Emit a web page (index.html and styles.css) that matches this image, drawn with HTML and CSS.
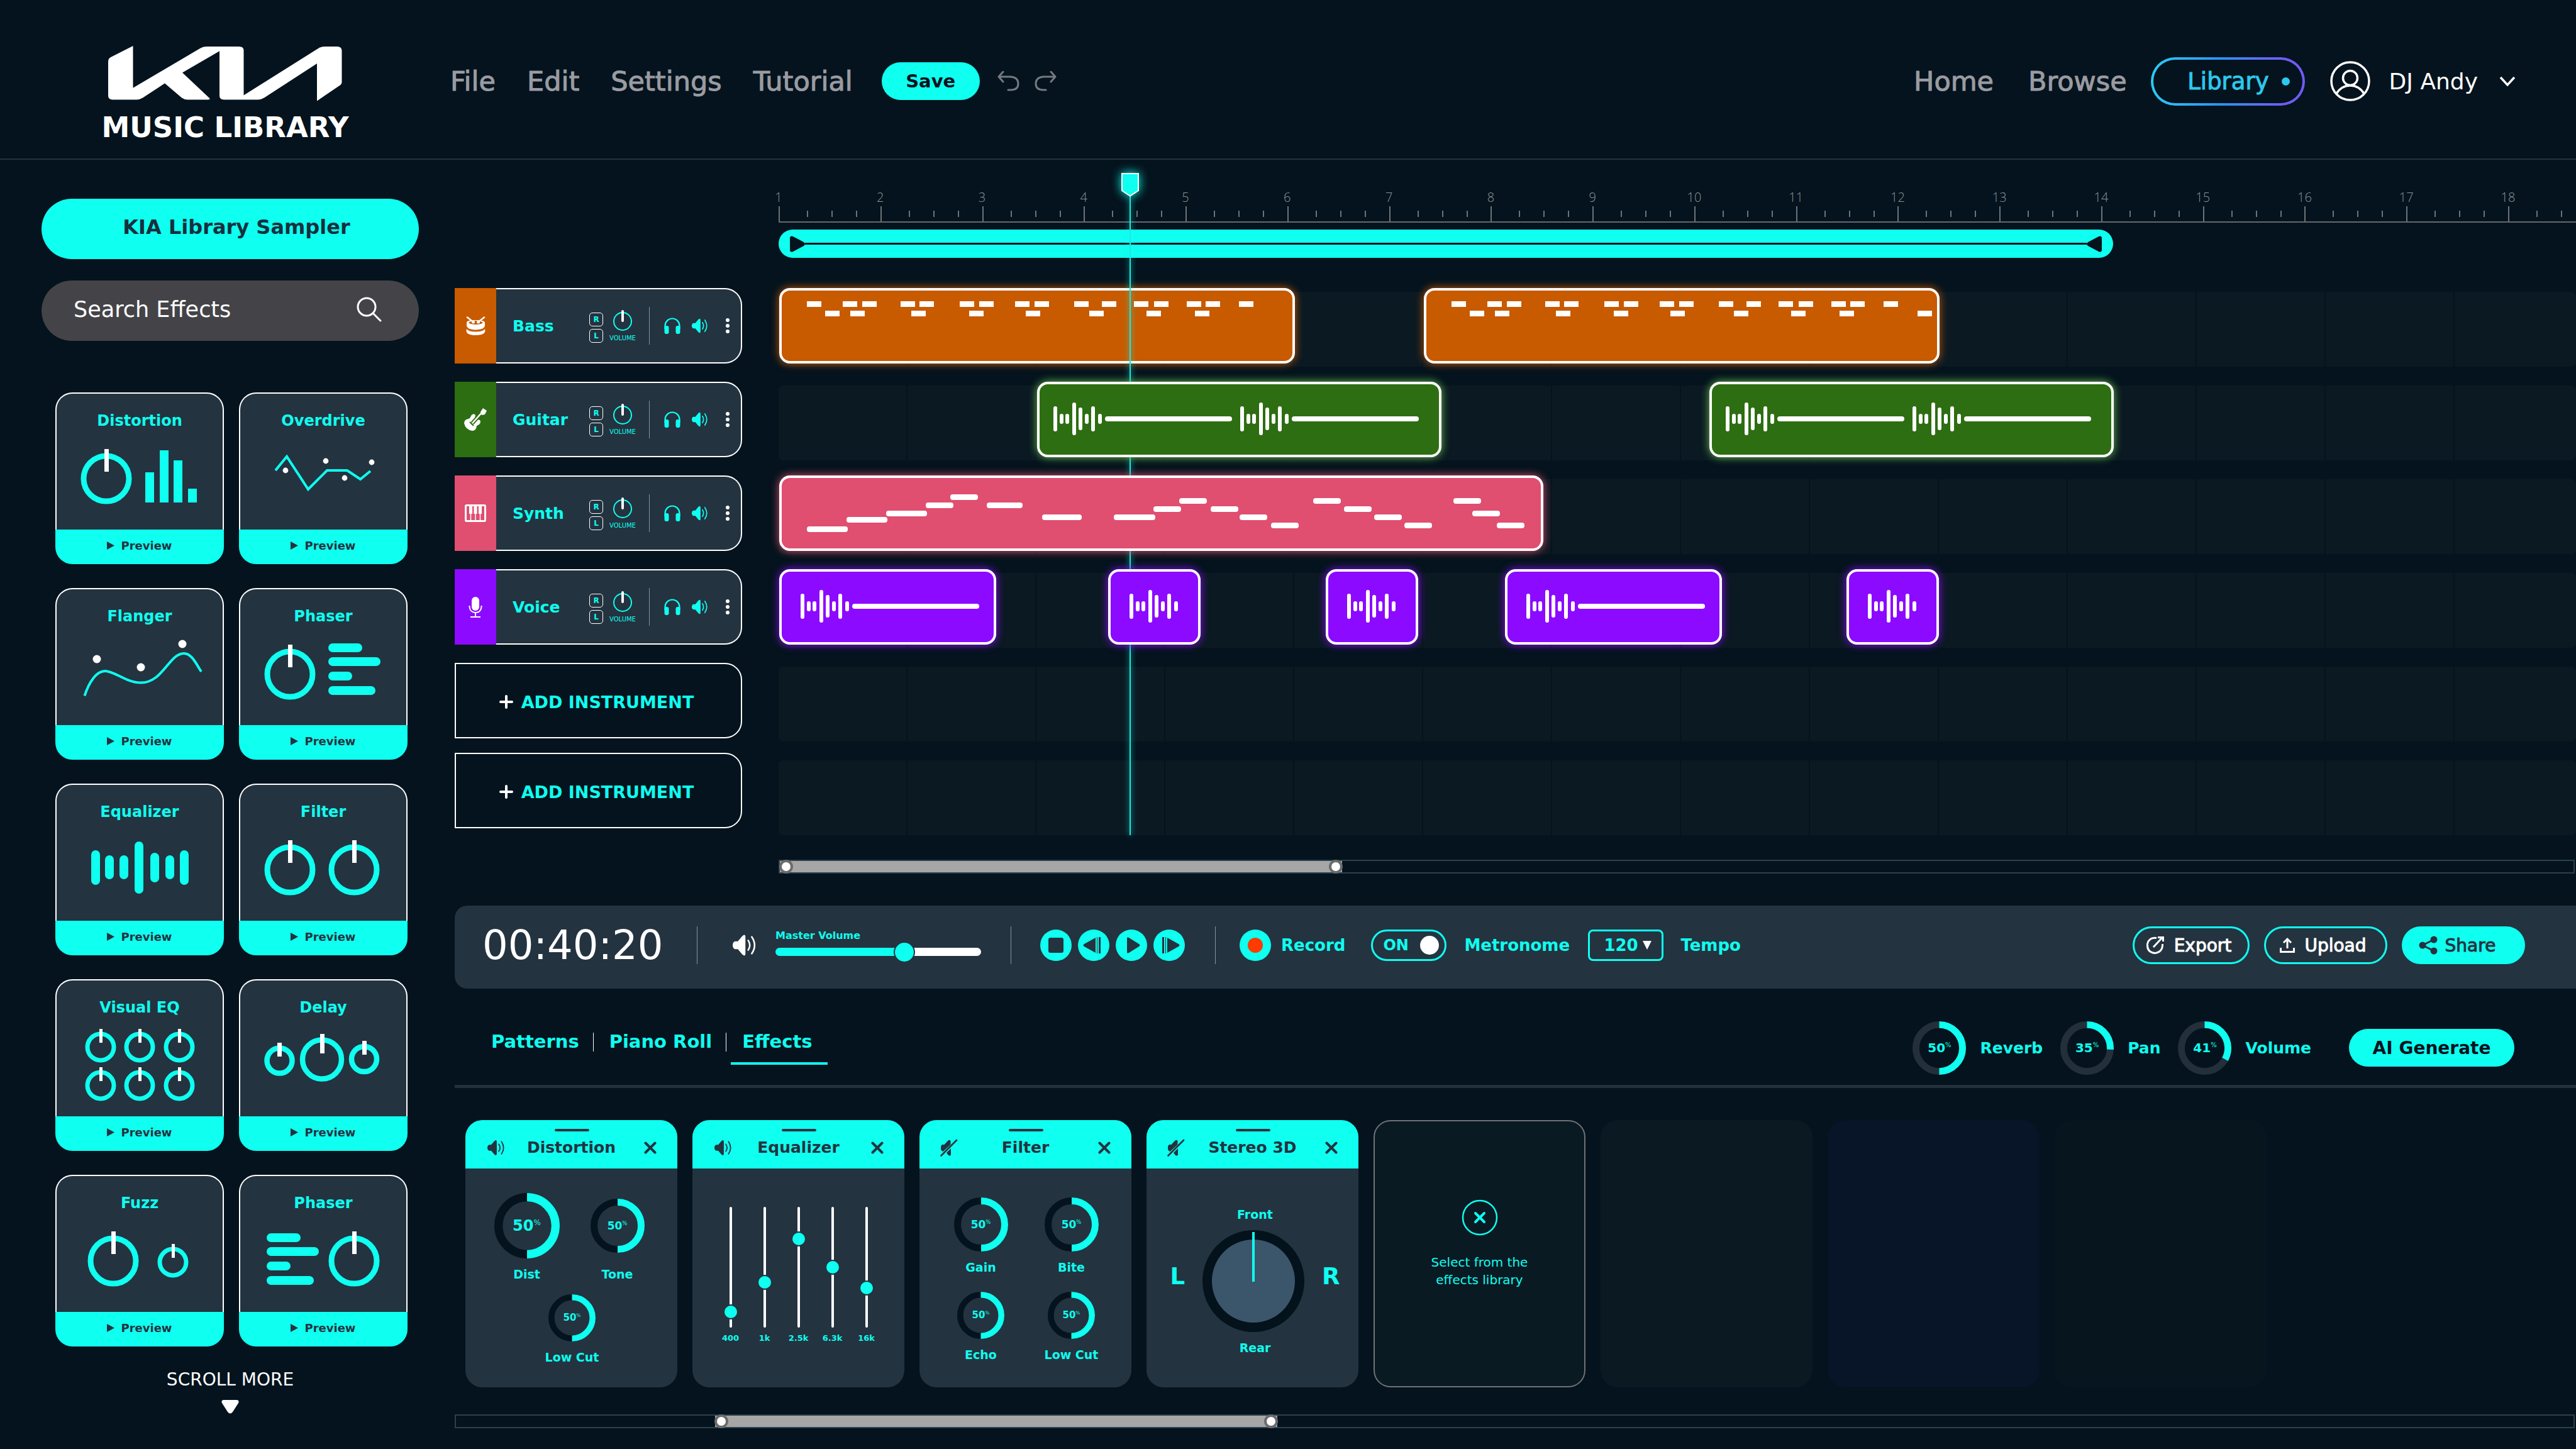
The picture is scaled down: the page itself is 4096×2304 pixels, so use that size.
FILE: index.html
```html
<!DOCTYPE html>
<html lang="en">
<head>
<meta charset="utf-8">
<title>KIA Music Library</title>
<link rel="stylesheet" href="styles.css">
</head>
<body>
<svg class="sprite" aria-hidden="true">
  <symbol id="speaker" viewBox="0 0 30 30"><path fill="currentColor" d="M3 10h3.500L12 3.500Q16 0 16 5v20q0 5-4 1.500L6.500 20H3q-3-1-3-5t3-5z"/><path d="M19.500 9q4 6 0 12M24 4.500q7 10.500 0 21" fill="none" stroke="currentColor" stroke-width="2" stroke-linecap="round"/></symbol>
  <symbol id="muted" viewBox="0 0 28 28"><path fill="currentColor" d="M3 9h3.500L12 3q3-2.500 4.500 0v6L4.500 20Q1 19 1 14.500T3 9zM17 15v10q-1 3-4 1l-3-4z"/><path d="M1.500 26.500L26 2" stroke="currentColor" stroke-width="2.600" stroke-linecap="round"/></symbol>
  <symbol id="phones" viewBox="0 0 26 26"><path d="M1.500 18v-5a11.500 11.500 0 0 1 23 0v5" fill="none" stroke="currentColor" stroke-width="2.200"/><rect x="0.500" y="13" width="7" height="13" rx="3" fill="currentColor"/><rect x="18.500" y="13" width="7" height="13" rx="3" fill="currentColor"/></symbol>
  <symbol id="more" viewBox="0 0 6 26"><g fill="#fff"><circle cx="3" cy="4" r="3"/><circle cx="3" cy="13" r="3"/><circle cx="3" cy="22" r="3"/></g></symbol>
  <symbol id="gain" viewBox="0 0 32 36"><circle cx="16" cy="19" r="14" fill="none" stroke="#0ffff0" stroke-width="2"/><path d="M16 3v15" stroke="#fff" stroke-width="4" stroke-linecap="round"/></symbol>
  <symbol id="close" viewBox="0 0 20 20"><path d="M2.500 2.500l15 15M17.500 2.500l-15 15" stroke="currentColor" stroke-width="4" stroke-linecap="round"/></symbol>
  <symbol id="play" viewBox="0 0 12 13"><path fill="currentColor" d="M0 0l12 6.500L0 13z"/></symbol>
  <symbol id="ticks" viewBox="0 0 162 26"><path fill="#6d7378" d="M0 2h2v24H0zM45 9h2v10h-2zM84 9h2v10h-2zM123 9h2v10h-2z"/></symbol>
  <symbol id="knob-l" viewBox="0 0 84 84" overflow="visible"><circle cx="42" cy="47" r="36" fill="none" stroke="#0ffff0" stroke-width="9"/><path d="M42.500 0v36" stroke="#fff" stroke-width="7"/></symbol>
  <symbol id="knob-s" viewBox="0 0 50 56" overflow="visible"><circle cx="25" cy="29" r="21" fill="none" stroke="#0ffff0" stroke-width="7"/><path d="M25.500 0v22" stroke="#fff" stroke-width="5"/></symbol>
  <symbol id="bars" viewBox="0 0 84 88"><g fill="#0ffff0"><rect width="54" height="14" rx="7"/><rect y="22" width="83" height="14" rx="7"/><rect y="45" width="38" height="14" rx="7"/><rect y="68" width="75" height="14" rx="7"/></g></symbol>
  <symbol id="dial50" viewBox="0 0 86 86"><circle class="dial-track" cx="43" cy="43" r="37.500"/><circle class="dial-value" cx="43" cy="43" r="37.500" pathLength="100" stroke-dasharray="50 100"/></symbol>
  <symbol id="wave" viewBox="0 0 90 60" overflow="visible"><g fill="#fff"><rect x="0" y="10" width="6" height="40" rx="3"/><rect x="10" y="22" width="6" height="16" rx="3"/><rect x="19" y="22" width="6" height="16" rx="3"/><rect x="30" y="4" width="6" height="52" rx="3"/><rect x="40" y="12" width="6" height="36" rx="3"/><rect x="50" y="22" width="6" height="16" rx="3"/><rect x="60" y="10" width="6" height="40" rx="3"/><rect x="71" y="22" width="6" height="16" rx="3"/></g></symbol>
  <symbol id="hold" viewBox="0 0 202 8"><rect width="202" height="8" rx="4" fill="#fff"/></symbol>
  <symbol id="beats" viewBox="0 0 812 112"><path fill="#fff" d="M40 17h23v9h-23zM97 17h23v9h-23zM128 17h23v9h-23zM189 17h23v9h-23zM219 17h23v9h-23zM283 17h23v9h-23zM314 17h23v9h-23zM371 17h23v9h-23zM402 17h23v9h-23zM465 17h23v9h-23zM509 17h23v9h-23zM560 17h23v9h-23zM592 17h23v9h-23zM644 17h23v9h-23zM674 17h23v9h-23zM727 17h23v9h-23zM69 32h23v9h-23zM109 32h23v9h-23zM206 32h23v9h-23zM298 32h23v9h-23zM388 32h23v9h-23zM489 32h23v9h-23zM580 32h23v9h-23zM657 32h23v9h-23z"/></symbol>
</svg>

<header class="top">
  <div class="brand">
    <svg class="brand-mark" viewBox="0 0 372 88" role="img" aria-label="KIA"><path fill="#fff" d="M39.500 0V66.700L146 4Q150.500 1 156 1H208Q215.500 1 215.500 7V78.600L334 4Q338.500 1 344 1H364Q371.500 1 371.500 8V57Q371.500 61 368 63L332 87.600V28L248 82.500Q243.500 85.400 238 85.400H184Q177 85.400 177 79V8.300L118 42.500L161 83Q163 85.400 159 85.400H126Q121 85.400 117 82.500L90 59.500L55 82.500Q50.500 85.400 45 85.400H7Q0 85.400 0 79V25Q0 20 4 18Z"/></svg>
    <span class="brand-name">MUSIC LIBRARY</span>
  </div>
  <nav class="menu" aria-label="Application">
    <a href="#">File</a><a href="#">Edit</a><a href="#">Settings</a><a href="#">Tutorial</a>
  </nav>
  <button class="save" type="button">Save</button>
  <button class="plain" type="button" aria-label="Undo"><svg width="36" height="32" viewBox="0 0 36 32"><path d="M9 1L2 9l7 8M2 9h19q12 1 12 11t-12 10h-4" class="arrow"/></svg></button>
  <button class="plain" type="button" aria-label="Redo"><svg width="36" height="32" viewBox="0 0 36 32"><path d="M27 1l7 8l-7 8M34 9H15Q3 10 3 20t12 10h4" class="arrow"/></svg></button>
  <nav class="sections" aria-label="Sections">
    <a href="#">Home</a><a href="#">Browse</a><a class="current" href="#">Library<i></i></a>
  </nav>
  <button class="account" type="button">
    <svg width="64" height="64" viewBox="0 0 64 64" fill="none" stroke="#fff" stroke-width="3.500"><circle cx="32" cy="32" r="30"/><circle cx="32" cy="27" r="11.500"/><path d="M10 52Q18 39 32 39T54 52"/></svg>
    <span>DJ Andy</span>
    <svg width="26" height="18" viewBox="0 0 26 18"><path d="M2 3l11 12L24 3" fill="none" stroke="#fff" stroke-width="3.500"/></svg>
  </button>
</header>

<div class="body">
<aside class="library">
  <button class="sampler" type="button">KIA Library Sampler</button>
  <form class="search" role="search">
    <input type="search" aria-label="Search Effects" placeholder="Search Effects">
    <svg width="40" height="40" viewBox="0 0 40 40" fill="none" stroke="#fff" stroke-width="3"><circle cx="16" cy="16" r="14"/><path d="M26 26l12 12" stroke-linecap="round"/></svg>
  </form>
  <div class="cards">
    <article class="card"><div class="card-top"><h3>Distortion</h3><svg viewBox="2 64 264 152"><use href="#knob-l" x="39" y="90" width="84" height="84"/><path fill="#0ffff0" d="M143 127h14v48h-14zM166 92h14v83h-14zM188 108h14v67h-14zM211 153h14v22h-14z"/></svg></div><button type="button"><svg><use href="#play"/></svg>Preview</button></article>
    <article class="card"><div class="card-top"><h3>Overdrive</h3><svg viewBox="2 64 264 152"><path d="M58 124L76 102L110 154L140 124H172L193 138L209 125" fill="none" stroke="#0ffff0" stroke-width="4"/><g fill="#fff"><circle cx="74" cy="124" r="4.400"/><circle cx="138" cy="109" r="4.400"/><circle cx="168" cy="136" r="4.400"/><circle cx="211" cy="111" r="4.400"/></g></svg></div><button type="button"><svg><use href="#play"/></svg>Preview</button></article>
    <article class="card"><div class="card-top"><h3>Flanger</h3><svg viewBox="2 64 264 152"><path d="M46.500 171.400C54 148 66 132 79 132C94 132 113 150.600 136 150.600C171 150.600 181 104 204.500 104C217 104 224 121 232 133" fill="none" stroke="#0ffff0" stroke-width="4"/><g fill="#fff"><circle cx="66" cy="113" r="6.500"/><circle cx="136" cy="126" r="6.500"/><circle cx="202" cy="89" r="6.500"/></g></svg></div><button type="button"><svg><use href="#play"/></svg>Preview</button></article>
    <article class="card"><div class="card-top"><h3>Phaser</h3><svg viewBox="2 64 264 152"><use href="#knob-l" x="39" y="90" width="84" height="84"/><use href="#bars" x="142" y="88" width="84" height="88"/></svg></div><button type="button"><svg><use href="#play"/></svg>Preview</button></article>
    <article class="card"><div class="card-top"><h3>Equalizer</h3><svg viewBox="2 64 264 152"><g fill="#0ffff0"><rect x="57" y="106" width="14" height="55" rx="7"/><rect x="79" y="114" width="14" height="38" rx="7"/><rect x="102" y="114" width="14" height="38" rx="7"/><rect x="126" y="92" width="14" height="83" rx="7"/><rect x="151" y="110" width="14" height="47" rx="7"/><rect x="175" y="114" width="14" height="38" rx="7"/><rect x="198" y="106" width="14" height="55" rx="7"/></g></svg></div><button type="button"><svg><use href="#play"/></svg>Preview</button></article>
    <article class="card"><div class="card-top"><h3>Filter</h3><svg viewBox="2 64 264 152"><use href="#knob-l" x="39" y="90" width="84" height="84"/><use href="#knob-l" x="141" y="90" width="84" height="84"/></svg></div><button type="button"><svg><use href="#play"/></svg>Preview</button></article>
    <article class="card"><div class="card-top"><h3>Visual EQ</h3><svg viewBox="2 64 264 152"><use href="#knob-s" x="47" y="79" width="50" height="56"/><use href="#knob-s" x="109" y="79" width="50" height="56"/><use href="#knob-s" x="172" y="79" width="50" height="56"/><use href="#knob-s" x="47" y="140" width="50" height="56"/><use href="#knob-s" x="109" y="140" width="50" height="56"/><use href="#knob-s" x="172" y="140" width="50" height="56"/></svg></div><button type="button"><svg><use href="#play"/></svg>Preview</button></article>
    <article class="card"><div class="card-top"><h3>Delay</h3><svg viewBox="2 64 264 152"><g fill="none" stroke="#0ffff0" stroke-width="8.500"><circle cx="64.500" cy="129.500" r="20"/><circle cx="132" cy="127.500" r="31"/><circle cx="199" cy="127" r="20"/></g><path fill="#fff" d="M61 101h7v22h-7zM129 87h7v31h-7zM196 98h7v22h-7z"/></svg></div><button type="button"><svg><use href="#play"/></svg>Preview</button></article>
    <article class="card"><div class="card-top"><h3>Fuzz</h3><svg viewBox="2 64 264 152"><use href="#knob-l" x="50" y="90" width="84" height="84"/><use href="#knob-s" x="162" y="110" width="50" height="56"/></svg></div><button type="button"><svg><use href="#play"/></svg>Preview</button></article>
    <article class="card"><div class="card-top"><h3>Phaser</h3><svg viewBox="2 64 264 152"><use href="#bars" x="44" y="93" width="84" height="88"/><use href="#knob-l" x="141" y="90" width="84" height="84"/></svg></div><button type="button"><svg><use href="#play"/></svg>Preview</button></article>
  </div>
  <button class="scroll-more" type="button">SCROLL MORE<svg width="28" height="22" viewBox="0 0 28 22"><path fill="#fff" d="M3 0h22q4 1 2 5l-9 14q-4 5-8 0L1 5q-2-4 2-5z"/></svg></button>
</aside>

<main class="studio">
<section class="arrange">
  <div class="tracks">
    <div class="track bass"><span class="badge"><svg width="31" height="30" viewBox="0 0 31 30"><path fill="#fff" d="M1 10q0-4 14.500-4T30 10v4q0 7-14.500 7.500Q1 21 1 14z"/><ellipse cx="15.500" cy="10" rx="11" ry="3" fill="#c85a00"/><path d="M2 1.500l9 7M29 1.500l-9 7" stroke="#fff" stroke-width="2.500" stroke-linecap="round"/><circle cx="11.500" cy="9" r="2.500" fill="#fff"/><circle cx="19.500" cy="9" r="2.500" fill="#fff"/><path fill="#fff" d="M1 20q3 4.500 14.500 4.500T30 20q3 10-14.500 10T1 20z"/></svg></span><span class="name">Bass</span><span class="rl"><button type="button">R</button><button type="button">L</button></span><span class="vol"><svg width="32" height="36"><use href="#gain"/></svg>VOLUME</span><i class="rule"></i><button class="plain" type="button" aria-label="Solo"><svg width="26" height="26"><use href="#phones"/></svg></button><button class="plain" type="button" aria-label="Mute"><svg width="28" height="26"><use href="#speaker"/></svg></button><button class="plain" type="button" aria-label="More"><svg width="6" height="26"><use href="#more"/></svg></button></div>
    <div class="track guitar"><span class="badge"><svg width="36" height="36" viewBox="0 0 36 36"><path fill="#fff" d="M11 12q4-5 7-1l-1 5 3 3q5-2 6 2 0 5-6 7-1 8-7 8Q2 34 0 24q0-6 7-7 3-1 4-5z"/><path d="M13 24L29 6" stroke="#2d6e12" stroke-width="6"/><path d="M13 24L29 6" stroke="#fff" stroke-width="2.500"/><path fill="#fff" d="M26 6l4-6 6 4-3 6-5 1z"/><path d="M9 22l6 6" stroke="#2d6e12" stroke-width="2"/></svg></span><span class="name">Guitar</span><span class="rl"><button type="button">R</button><button type="button">L</button></span><span class="vol"><svg width="32" height="36"><use href="#gain"/></svg>VOLUME</span><i class="rule"></i><button class="plain" type="button" aria-label="Solo"><svg width="26" height="26"><use href="#phones"/></svg></button><button class="plain" type="button" aria-label="Mute"><svg width="28" height="26"><use href="#speaker"/></svg></button><button class="plain" type="button" aria-label="More"><svg width="6" height="26"><use href="#more"/></svg></button></div>
    <div class="track synth"><span class="badge"><svg width="34" height="28" viewBox="0 0 34 28"><rect x="1.500" y="1.500" width="31" height="25" rx="1.500" fill="none" stroke="#fff" stroke-width="3"/><path fill="#fff" d="M7 2h5v13H7zM14.500 2h5v13h-5zM22 2h5v13h-5z"/><path d="M9.500 14v12M17 14v12M24.500 14v12" stroke="#fff" stroke-width="1.500"/></svg></span><span class="name">Synth</span><span class="rl"><button type="button">R</button><button type="button">L</button></span><span class="vol"><svg width="32" height="36"><use href="#gain"/></svg>VOLUME</span><i class="rule"></i><button class="plain" type="button" aria-label="Solo"><svg width="26" height="26"><use href="#phones"/></svg></button><button class="plain" type="button" aria-label="Mute"><svg width="28" height="26"><use href="#speaker"/></svg></button><button class="plain" type="button" aria-label="More"><svg width="6" height="26"><use href="#more"/></svg></button></div>
    <div class="track voice"><span class="badge"><svg width="22" height="33" viewBox="0 0 22 33"><rect x="5" y="0" width="12" height="22" rx="6" fill="#fff"/><path d="M1.500 14v2q1 9 9.500 9t9.500-9v-2M11 25v6M3 32h16" fill="none" stroke="#fff" stroke-width="2"/></svg></span><span class="name">Voice</span><span class="rl"><button type="button">R</button><button type="button">L</button></span><span class="vol"><svg width="32" height="36"><use href="#gain"/></svg>VOLUME</span><i class="rule"></i><button class="plain" type="button" aria-label="Solo"><svg width="26" height="26"><use href="#phones"/></svg></button><button class="plain" type="button" aria-label="Mute"><svg width="28" height="26"><use href="#speaker"/></svg></button><button class="plain" type="button" aria-label="More"><svg width="6" height="26"><use href="#more"/></svg></button></div>
    <button class="add" type="button"><svg width="22" height="22" viewBox="0 0 22 22"><path d="M11 2v18M2 11h18" stroke="#fff" stroke-width="4" stroke-linecap="round"/></svg>ADD INSTRUMENT</button>
    <button class="add" type="button"><svg width="22" height="22" viewBox="0 0 22 22"><path d="M11 2v18M2 11h18" stroke="#fff" stroke-width="4" stroke-linecap="round"/></svg>ADD INSTRUMENT</button>
  </div>
  <div class="timeline">
    <div class="ruler">
      <div><span>1</span><svg><use href="#ticks"/></svg></div><div><span>2</span><svg><use href="#ticks"/></svg></div><div><span>3</span><svg><use href="#ticks"/></svg></div><div><span>4</span><svg><use href="#ticks"/></svg></div><div><span>5</span><svg><use href="#ticks"/></svg></div><div><span>6</span><svg><use href="#ticks"/></svg></div><div><span>7</span><svg><use href="#ticks"/></svg></div><div><span>8</span><svg><use href="#ticks"/></svg></div><div><span>9</span><svg><use href="#ticks"/></svg></div><div><span>10</span><svg><use href="#ticks"/></svg></div><div><span>11</span><svg><use href="#ticks"/></svg></div><div><span>12</span><svg><use href="#ticks"/></svg></div><div><span>13</span><svg><use href="#ticks"/></svg></div><div><span>14</span><svg><use href="#ticks"/></svg></div><div><span>15</span><svg><use href="#ticks"/></svg></div><div><span>16</span><svg><use href="#ticks"/></svg></div><div><span>17</span><svg><use href="#ticks"/></svg></div><div><span>18</span><svg><use href="#ticks"/></svg></div>
    </div>
    <div class="loop" style="width:2122px"><svg width="24" height="26" viewBox="0 0 24 26"><path d="M0 4q0-5 5-3l17 9q4 3 0 6L5 25q-5 2-5-3z"/></svg><i></i><svg width="24" height="26" viewBox="0 0 24 26"><path d="M24 4q0-5-5-3L2 10q-4 3 0 6l17 9q5 2 5-3z"/></svg></div>
    <div class="lane"><div class="clip bass" style="left:1px;width:820px"><svg viewBox="0 0 812 112"><use href="#beats"/></svg></div><div class="clip bass" style="left:1026px;width:820px"><svg viewBox="0 0 812 112"><use href="#beats"/><path fill="#fff" d="M781 32h23v9h-23z"/></svg></div></div>
    <div class="lane"><div class="clip guitar" style="left:411px;width:643px"><svg viewBox="0 0 635 112"><use href="#wave" x="22" y="25" width="90" height="60"/><use href="#hold" x="104" y="51" width="202" height="8"/><use href="#wave" x="319" y="25" width="90" height="60"/><use href="#hold" x="401" y="51" width="202" height="8"/></svg></div><div class="clip guitar" style="left:1480px;width:643px"><svg viewBox="0 0 635 112"><use href="#wave" x="22" y="25" width="90" height="60"/><use href="#hold" x="104" y="51" width="202" height="8"/><use href="#wave" x="319" y="25" width="90" height="60"/><use href="#hold" x="401" y="51" width="202" height="8"/></svg></div></div>
    <div class="lane"><div class="clip synth" style="left:1px;width:1215px"><svg viewBox="4 4 1207 112"><g fill="#fff"><rect x="44" y="81" width="65" height="9" rx="4"/><rect x="107" y="66" width="65" height="9" rx="4"/><rect x="170" y="56" width="65" height="9" rx="4"/><rect x="233" y="43" width="44" height="9" rx="4"/><rect x="272" y="30" width="44" height="9" rx="4"/><rect x="330" y="43" width="57" height="9" rx="4"/><rect x="418" y="62" width="63" height="9" rx="4"/><rect x="532" y="62" width="66" height="9" rx="4"/><rect x="595" y="49" width="44" height="9" rx="4"/><rect x="636" y="36" width="44" height="9" rx="4"/><rect x="686" y="49" width="44" height="9" rx="4"/><rect x="732" y="62" width="44" height="9" rx="4"/><rect x="782" y="75" width="44" height="9" rx="4"/><rect x="849" y="36" width="44" height="9" rx="4"/><rect x="898" y="49" width="44" height="9" rx="4"/><rect x="946" y="62" width="44" height="9" rx="4"/><rect x="994" y="75" width="44" height="9" rx="4"/><rect x="1072" y="36" width="44" height="9" rx="4"/><rect x="1102" y="56" width="44" height="9" rx="4"/><rect x="1141" y="75" width="44" height="9" rx="4"/></g></svg></div></div>
    <div class="lane"><div class="clip voice" style="left:1px;width:345px"><svg viewBox="0 0 337 112"><use href="#wave" x="30" y="25" width="90" height="60"/><use href="#hold" x="112" y="51" width="202" height="8"/></svg></div><div class="clip voice" style="left:524px;width:147px"><svg viewBox="0 0 139 112"><use href="#wave" x="30" y="25" width="90" height="60"/></svg></div><div class="clip voice" style="left:870px;width:147px"><svg viewBox="0 0 139 112"><use href="#wave" x="30" y="25" width="90" height="60"/></svg></div><div class="clip voice" style="left:1155px;width:345px"><svg viewBox="0 0 337 112"><use href="#wave" x="30" y="25" width="90" height="60"/><use href="#hold" x="112" y="51" width="202" height="8"/></svg></div><div class="clip voice" style="left:1698px;width:147px"><svg viewBox="0 0 139 112"><use href="#wave" x="30" y="25" width="90" height="60"/></svg></div></div>
    <div class="lane"></div>
    <div class="lane"></div>
    <div class="playhead" style="left:545px"><svg width="28" height="38" viewBox="0 0 28 38"><path d="M1 1h26v27l-13 8.500L1 28z" fill="#0ffff0" stroke="#fff" stroke-width="2"/></svg><i></i></div>
  </div>
</section>
<div class="scrollbar arrange-scroll"><div style="width:894px"></div></div>

<section class="transport" aria-label="Transport">
  <output class="clock">00:40:20</output>
  <i class="rule"></i>
  <svg class="master-icon" width="42" height="38"><use href="#speaker"/></svg>
  <div class="master"><label for="master">Master Volume</label><input id="master" type="range" min="0" max="100" value="64"></div>
  <i class="rule"></i>
  <div class="buttons">
    <button type="button" aria-label="Stop"><svg viewBox="0 0 50 50"><rect x="13" y="13" width="24" height="24" rx="3"/></svg></button>
    <button type="button" aria-label="Previous"><svg viewBox="0 0 50 50"><path d="M28 13v24L10 27q-3-2 0-4zM30 12h1v26h-1zM33 12h3v26h-3z"/></svg></button>
    <button type="button" aria-label="Play"><svg viewBox="0 0 50 50"><path d="M18 14q0-3 3-1l16 10q3 2 0 4L21 37q-3 2-3-1z"/></svg></button>
    <button type="button" aria-label="Next"><svg viewBox="0 0 50 50"><path d="M22 13v24l18-10q3-2 0-4zM19 12h1v26h-1zM14 12h3v26h-3z"/></svg></button>
  </div>
  <i class="rule"></i>
  <button class="record" type="button"><svg width="50" height="50"><circle cx="25" cy="25" r="25" fill="#0ffff0"/><circle cx="25" cy="25" r="12" fill="#ff3b00"/></svg>Record</button>
  <span class="switch"><label for="metronome">ON</label><input id="metronome" type="checkbox" checked></span>
  <label for="metronome" class="metro-label">Metronome</label>
  <span class="tempo"><select id="tempo"><option>120</option></select><svg width="14" height="14" viewBox="0 0 14 14"><path fill="#fff" d="M0 0h14L7 14z"/></svg></span>
  <label for="tempo" class="tempo-label">Tempo</label>
  <div class="share">
    <button type="button"><svg width="30" height="30" viewBox="0 0 30 30" fill="none" stroke="#fff" stroke-width="3"><path d="M17 3.500Q5 2 2.500 13Q1.500 26 14 27.500Q27 26 26.500 13M12 18L26 3M19 2.500h8.500V9"/></svg>Export</button>
    <button type="button"><svg width="24" height="26" viewBox="0 0 24 26" fill="none" stroke="#fff" stroke-width="3"><path d="M12 18V4M6 9l6-6 6 6M1.500 17v6.500h21V17"/></svg>Upload</button>
    <button class="solid" type="button"><svg width="30" height="30" viewBox="0 0 30 30" fill="#243340" stroke="#243340" stroke-width="3"><path d="M24 6L6 15l18 9" fill="none"/><circle cx="24" cy="6" r="4"/><circle cx="6" cy="15" r="4"/><circle cx="24" cy="24" r="4"/></svg>Share</button>
  </div>
</section>

<section class="modes">
  <div class="tabs" role="tablist"><button role="tab" type="button">Patterns</button><i></i><button role="tab" type="button">Piano Roll</button><i></i><button role="tab" type="button" aria-selected="true">Effects</button></div>
  <div class="sends">
    <div><span class="dial d85"><svg viewBox="0 0 86 86"><circle class="dial-track" cx="43" cy="43" r="37.500"/><circle class="dial-value" cx="43" cy="43" r="37.500" pathLength="100" stroke-dasharray="50 100"/></svg><b>50<sup>%</sup></b></span>Reverb</div>
    <div><span class="dial d85"><svg viewBox="0 0 86 86"><circle class="dial-track" cx="43" cy="43" r="37.500"/><circle class="dial-value" cx="43" cy="43" r="37.500" pathLength="100" stroke-dasharray="26 100"/></svg><b>35<sup>%</sup></b></span>Pan</div>
    <div><span class="dial d85"><svg viewBox="0 0 86 86"><circle class="dial-track" cx="43" cy="43" r="37.500"/><circle class="dial-value" cx="43" cy="43" r="37.500" pathLength="100" stroke-dasharray="33 100"/></svg><b>41<sup>%</sup></b></span>Volume</div>
    <button class="generate" type="button">AI Generate</button>
  </div>
</section>

<section class="rack">
  <article class="fx">
    <header><svg width="32" height="28"><use href="#speaker"/></svg><h3>Distortion</h3><button class="plain" type="button" aria-label="Remove"><svg width="20" height="20"><use href="#close"/></svg></button></header>
    <div class="knobs tall">
      <div><span class="slot"><span class="dial d104"><svg><use href="#dial50"/></svg><b>50<sup>%</sup></b></span></span>Dist</div>
      <div><span class="slot"><span class="dial d86"><svg><use href="#dial50"/></svg><b>50<sup>%</sup></b></span></span>Tone</div>
      <div class="wide"><span class="dial d75"><svg><use href="#dial50"/></svg><b>50<sup>%</sup></b></span>Low Cut</div>
    </div>
  </article>
  <article class="fx">
    <header><svg width="32" height="28"><use href="#speaker"/></svg><h3>Equalizer</h3><button class="plain" type="button" aria-label="Remove"><svg width="20" height="20"><use href="#close"/></svg></button></header>
    <div class="bands">
      <label><input type="range" value="9">400</label><label><input type="range" value="36">1k</label><label><input type="range" value="76">2.5k</label><label><input type="range" value="50">6.3k</label><label><input type="range" value="31">16k</label>
    </div>
  </article>
  <article class="fx">
    <header><svg width="28" height="28"><use href="#muted"/></svg><h3>Filter</h3><button class="plain" type="button" aria-label="Remove"><svg width="20" height="20"><use href="#close"/></svg></button></header>
    <div class="knobs">
      <div><span class="dial d86"><svg><use href="#dial50"/></svg><b>50<sup>%</sup></b></span>Gain</div>
      <div><span class="dial d86"><svg><use href="#dial50"/></svg><b>50<sup>%</sup></b></span>Bite</div>
      <div><span class="dial d75"><svg><use href="#dial50"/></svg><b>50<sup>%</sup></b></span>Echo</div>
      <div><span class="dial d75"><svg><use href="#dial50"/></svg><b>50<sup>%</sup></b></span>Low Cut</div>
    </div>
  </article>
  <article class="fx">
    <header><svg width="28" height="28"><use href="#muted"/></svg><h3>Stereo 3D</h3><button class="plain" type="button" aria-label="Remove"><svg width="20" height="20"><use href="#close"/></svg></button></header>
    <div class="stereo"><span>Front</span><div><b>L</b><svg width="162" height="162" viewBox="0 0 162 162"><circle cx="81" cy="81" r="81" fill="#04121c"/><circle cx="81" cy="81" r="66" fill="#3b566b"/><path d="M81 3v79" stroke="#0ffff0" stroke-width="4"/></svg><b>R</b></div><span>Rear</span></div>
  </article>
  <button class="slot-add" type="button"><svg width="58" height="58" viewBox="0 0 58 58" fill="none" stroke="#0ffff0"><circle cx="29" cy="29" r="27" stroke-width="2.500"/><path d="M22 22l14 14M36 22L22 36" stroke-width="4" stroke-linecap="round"/></svg>Select from the<br>effects library</button>
  <div class="slot-empty"></div>
  <div class="slot-empty blue"></div>
  <div class="slot-empty faint"></div>
</section>
<div class="scrollbar rack-scroll"><div style="width:894px"></div></div>
</main>
</div>
</body>
</html>
```
FILE: styles.css
```css
:root {
  --bg: #04131d;
  --panel: #243340;
  --accent: #0ffff0;
  --line: #24323f;
}
* { box-sizing: border-box; }
body {
  margin: 0;
  overflow-x: hidden;
  background: var(--bg);
  color: var(--accent);
  font-family: "DejaVu Sans", Verdana, sans-serif;
}
button, input, select {
  margin: 0;
  padding: 0;
  border: 0;
  background: none;
  color: inherit;
  font: inherit;
}
a { color: inherit; text-decoration: none; }
h3 { margin: 0; }
svg { display: block; flex: none; }
.sprite { position: absolute; width: 0; height: 0; }
.plain { display: flex; align-items: center; justify-content: center; }
.arrow { fill: none; stroke: #75797f; stroke-width: 3; stroke-linecap: round; stroke-linejoin: round; }

/* Header */
.top {
  display: flex;
  align-items: center;
  height: 254px;
  padding-top: 6px;
  border-bottom: 2px solid var(--line);
}
.brand {
  display: flex;
  flex-direction: column;
  align-items: center;
  width: 716px;
  padding: 42px 0 0;
  gap: 18px;
}
.brand-mark { width: 372px; height: 88px; }
.brand-name { color: #fff; font-size: 45px; font-weight: bold; line-height: 48px; }
.menu { display: flex; gap: 50px; color: #9a9ba1; font-size: 43px; -webkit-text-stroke: 1px; }
.save {
  width: 156px;
  height: 60px;
  margin: 0 28px 0 46px;
  border-radius: 30px;
  background: var(--accent);
  color: var(--bg);
  font-size: 29px;
  font-weight: bold;
}
.top > .plain { margin-right: 22px; }
.sections {
  display: flex;
  align-items: center;
  gap: 55px;
  margin-left: auto;
  color: #9a9ba1;
  font-size: 43px;
  -webkit-text-stroke: 1px;
}
.sections .current {
  display: flex;
  align-items: center;
  justify-content: flex-end;
  gap: 20px;
  width: 245px;
  height: 77px;
  margin-left: -17px;
  padding-right: 20px;
  border: 4px solid transparent;
  border-radius: 39px;
  background: linear-gradient(var(--bg), var(--bg)) padding-box, linear-gradient(90deg, #2dcbf5, #2d92f0 45%, #6f5cf5 85%) border-box;
  color: #2dc8ee;
  font-size: 37px;
}
.current i { width: 13px; height: 13px; border-radius: 50%; background: #2dc8ee; }
.account {
  display: flex;
  align-items: center;
  gap: 34px;
  margin: 0 96px 0 40px;
  color: #fff;
  font-size: 36px;
}
.account svg:first-child { margin-right: -4px; }

/* Effects library */
.body { display: flex; }
.library {
  display: flex;
  flex: none;
  flex-direction: column;
  width: 723px;
  padding: 62px 57px 0 66px;
}
.sampler {
  height: 96px;
  padding: 0 0 6px 20px;
  border-radius: 48px;
  background: var(--accent);
  color: #16303e;
  font-size: 32px;
  font-weight: bold;
}
.search {
  display: flex;
  align-items: center;
  height: 96px;
  margin-top: 34px;
  padding: 0 59px 5px 51px;
  border-radius: 48px;
  background: #444448;
}
.search input { flex: 1; min-width: 0; outline: 0; color: #fff; font-size: 35px; appearance: none; }
.search input::placeholder { color: #fff; opacity: 1; }
.cards {
  display: grid;
  grid-template-columns: 1fr 1fr;
  gap: 38px 24px;
  padding: 82px 18px 0 22px;
}
.card-top {
  height: 218px;
  padding-top: 26px;
  border: 2px solid #fff;
  border-bottom: 0;
  border-radius: 27px 27px 0 0;
  background: var(--panel);
}
.card h3 { height: 36px; font-size: 24px; line-height: 34px; text-align: center; }
.card-top svg { width: 100%; height: 152px; }
.card button {
  display: flex;
  align-items: center;
  justify-content: center;
  gap: 10px;
  width: 100%;
  height: 55px;
  padding-bottom: 4px;
  border-radius: 0 0 27px 27px;
  background: var(--accent);
  color: var(--panel);
  font-size: 18px;
  font-weight: bold;
}
.card button svg { width: 12px; height: 13px; }
.scroll-more {
  display: flex;
  flex-direction: column;
  align-items: center;
  gap: 14px;
  margin-top: 35px;
  color: #fff;
  font-size: 28px;
  line-height: 36px;
}

/* Arrangement */
.studio { flex: 1; min-width: 0; }
.arrange { display: grid; grid-template-columns: 457px 1fr; column-gap: 58px; }
.tracks { display: flex; flex-direction: column; gap: 29px; padding-top: 204px; }
.track {
  display: grid;
  grid-template-columns: 66px 26px 122px 24px 58px 26px 11px 26px 17px 28px 27px 6px;
  align-items: center;
  height: 120px;
  border: 2px solid #fff;
  border-left: 0;
  border-radius: 0 27px 27px 0;
  background: var(--panel);
}
.badge { display: grid; place-items: center; height: 120px; margin: -2px 0; }
.bass .badge, .clip.bass { background: #c85a00; }
.guitar .badge, .clip.guitar { background: #2d6e12; }
.synth .badge, .clip.synth { background: #e04e70; }
.voice .badge, .clip.voice { background: #8c0aff; }
.name { grid-column: 3; font-size: 25px; font-weight: bold; }
.rl { display: flex; flex-direction: column; gap: 4px; width: 22px; padding-top: 6px; }
.rl button { width: 22px; height: 22px; border: 1px solid #fff; border-radius: 5px; font-size: 12px; font-weight: bold; line-height: 18px; }
.vol { display: flex; flex-direction: column; align-items: center; gap: 4px; font-size: 10px; line-height: 12px; }
.rule { width: 1px; height: 60px; background: #8a9299; }
.track .rule { justify-self: center; }
.track button:nth-of-type(1) { grid-column: 8; }
.track button:nth-of-type(2) { grid-column: 10; }
.track button:nth-of-type(3) { grid-column: 12; }
.add {
  display: flex;
  align-items: center;
  justify-content: center;
  gap: 13px;
  height: 120px;
  padding: 4px 6px 0 0;
  border: 2px solid #fff;
  border-radius: 0 27px 27px 0;
  font-size: 27px;
  font-weight: bold;
}
.add + .add { margin-top: -6px; }
.timeline { position: relative; min-width: 0; padding-top: 48px; }
.ruler { display: flex; border-bottom: 2px solid #63696e; color: #8a949c; }
.ruler div { flex: 0 0 calc(100% * 3 / 53); min-width: 0; }
.ruler span { display: block; width: 40px; margin-left: -20px; font: 300 20px/24px "Open Sans", sans-serif; text-align: center; }
.ruler svg { width: 162px; height: 26px; }
.ruler div:last-child { flex-shrink: 1; }
.loop {
  display: flex;
  align-items: center;
  height: 45px;
  margin: 11px 0 54px;
  padding: 0 18px;
  border-radius: 23px;
  background: var(--accent);
}
.loop i { flex: 1; height: 3px; background: var(--bg); }
.loop path { fill: var(--bg); }
.lane {
  position: relative;
  height: 119px;
  margin-bottom: 30px;
  border-radius: 8px;
  background: repeating-linear-gradient(90deg, #0b1922 0 203px, #06131c 203px 205px);
}
.lane:nth-last-child(2) { margin-bottom: 0; }
.clip {
  position: absolute;
  top: -6px;
  z-index: 3;
  height: 120px;
  overflow: visible;
  border: 4px solid #fff;
  border-radius: 17px;
}
.clip svg { width: 100%; height: 112px; }
.clip.bass { z-index: 1; box-shadow: 0 0 14px #c85a00; }
.clip.guitar { box-shadow: 0 0 14px #6cc050; }
.clip.synth { box-shadow: 0 0 14px #e04e70; }
.clip.voice { box-shadow: 0 0 14px #8c0aff; }
.playhead {
  position: absolute;
  top: 21px;
  bottom: 0;
  z-index: 2;
  display: flex;
  flex-direction: column;
  align-items: center;
  width: 28px;
}
.playhead svg { filter: drop-shadow(0 0 8px #0ffff0); }
.playhead i { flex: 1; width: 2px; margin-top: -2px; background: #1fe8e0; box-shadow: 0 0 10px #0ffff0; }
.scrollbar {
  height: 22px;
  margin-right: 2px;
  border: 2px solid #2c404e;
}
.scrollbar div {
  display: flex;
  justify-content: space-between;
  height: 18px;
  background: #a6a6a6;
}
.scrollbar div::before, .scrollbar div::after {
  content: "";
  box-sizing: border-box;
  width: 22px;
  height: 22px;
  margin: -2px -1px 0;
  border: 4px solid #6b6b6b;
  border-radius: 50%;
  background: #fff;
}
.arrange-scroll { margin-top: 39px; margin-left: 515px; }
.rack-scroll { margin-top: 43px; margin-bottom: 33px; padding-left: 412px; }

/* Transport */
.transport {
  display: flex;
  align-items: center;
  height: 132px;
  margin-top: 51px;
  padding: 0 81px 6px 44px;
  border-radius: 20px 0 0 20px;
  background: var(--panel);
  font-size: 26px;
  font-weight: bold;
}
.transport > * { flex: none; }
.clock { width: 287px; margin-right: 54px; color: #fff; font-size: 64px; font-weight: normal; }
.master-icon { margin: 0 28px 0 54px; color: #fff; }
.master { width: 327px; margin-right: 47px; }
.master label { display: block; font-size: 16px; line-height: 20px; }
.master input {
  display: block;
  width: 100%;
  height: 30px;
  appearance: none;
}
.master input::-webkit-slider-runnable-track {
  height: 13px;
  border-radius: 7px;
  background: linear-gradient(90deg, var(--accent) 62%, #fff 62%);
}
.master input::-webkit-slider-thumb {
  width: 30px;
  height: 30px;
  margin-top: -8px;
  border-radius: 50%;
  background: var(--accent);
  box-shadow: 0 0 0 2px var(--panel);
  appearance: none;
}
.buttons { display: flex; gap: 10px; margin: 0 48px 0 46px; }
.buttons button { width: 50px; height: 50px; border-radius: 50%; background: var(--accent); color: var(--panel); }
.buttons svg { fill: var(--panel); }
.record { display: flex; align-items: center; gap: 16px; margin: 0 41px 0 38px; font-weight: bold; }
.switch {
  display: flex;
  align-items: center;
  justify-content: space-between;
  width: 120px;
  height: 50px;
  padding: 0 9px 0 16px;
  border: 3px solid var(--accent);
  border-radius: 25px;
  font-size: 24px;
}
.switch input { width: 30px; height: 30px; border-radius: 50%; background: #fff; appearance: none; }
.metro-label { width: 172px; margin: 0 25px 0 28px; }
.tempo {
  position: relative;
  display: flex;
  align-items: center;
  width: 120px;
  height: 50px;
  border: 3px solid var(--accent);
  border-radius: 8px;
}
.tempo select { width: 100%; height: 100%; padding-left: 22px; font-weight: bold; appearance: none; }
.tempo svg { position: absolute; right: 16px; pointer-events: none; }
.tempo-label { margin-left: 27px; }
.share { display: flex; gap: 23px; margin-left: auto; }
.share button {
  display: flex;
  align-items: center;
  justify-content: center;
  gap: 15px;
  min-width: 186px;
  height: 60px;
  padding-right: 8px;
  border: 3px solid var(--accent);
  border-radius: 30px;
  color: #fff;
  font-size: 28px;
  font-weight: normal;
  -webkit-text-stroke: 1px;
}
.share button + button { min-width: 196px; }
.share .solid { gap: 12px; padding-right: 20px; background: var(--accent); color: var(--panel); }

/* Tabs and sends */
.modes {
  display: flex;
  align-items: center;
  justify-content: space-between;
  height: 158px;
  padding: 35px 98px 0 40px;
  border-bottom: 5px solid #22303c;
}
.tabs { display: flex; font-size: 29px; }
.tabs button {
  height: 54px;
  padding: 0 18px 16px;
  border-bottom: 4px solid transparent;
  font-weight: bold;
  line-height: 34px;
}
.tabs i { width: 1px; height: 30px; margin: 3px 7px 0 4px; background: #fff; }
.tabs [aria-selected="true"] { padding-right: 24px; border-color: var(--accent); }
.sends { display: flex; align-items: center; gap: 28px; font-size: 25px; font-weight: bold; }
.sends > div { display: flex; align-items: center; gap: 22px; }
.generate {
  width: 263px;
  height: 60px;
  margin-left: 32px;
  border-radius: 30px;
  background: var(--accent);
  color: var(--bg);
  font-size: 28px;
  font-weight: bold;
}
.dial { display: grid; place-items: center; }
.dial > * { grid-area: 1 / 1; }
.dial svg { width: 100%; height: 100%; }
.dial b { line-height: 1; }
.dial sup { font-size: 50%; font-weight: normal; line-height: 0; vertical-align: super; }
.dial-track, .dial-value { fill: none; stroke-width: 11; }
.dial-track { stroke: var(--bg); }
.dial-value { stroke: var(--accent); transform: rotate(-90deg); transform-origin: 43px 43px; }
.sends .dial-track { stroke: #23303c; }
.d85 { width: 85px; height: 85px; font-size: 20px; }
.d104 { width: 104px; height: 104px; font-size: 24px; }
.d86 { width: 86px; height: 86px; font-size: 17px; }
.d75 { width: 75px; height: 75px; font-size: 15px; }

/* Effects rack */
.rack { display: flex; gap: 24px; padding: 51px 0 0 17px; }
.rack > * { flex: none; width: 337px; height: 425px; border-radius: 27px; }
.fx { overflow: hidden; background: var(--panel); }
.fx header {
  position: relative;
  display: grid;
  grid-template-columns: 32px 1fr 32px;
  align-items: center;
  height: 77px;
  padding: 10px 33px 0;
  background: var(--accent);
  color: var(--panel);
}
.fx header .plain { justify-self: end; }
.fx header::before {
  content: "";
  position: absolute;
  top: 14px;
  left: 50%;
  width: 55px;
  height: 4px;
  margin-left: -27px;
  border-radius: 2px;
  background: var(--panel);
}
.fx h3 { font-size: 25px; text-align: center; }
.knobs {
  display: grid;
  grid-template-columns: 144px 144px;
  justify-content: center;
  gap: 27px 0;
  padding: 46px 0 0 2px;
  font-size: 19px;
  font-weight: bold;
  line-height: 24px;
}
.knobs.tall { gap: 20px 0; padding-top: 39px; }
.knobs > div { display: flex; flex-direction: column; align-items: center; gap: 13px; }
.knobs .slot { display: flex; align-items: center; height: 104px; }
.knobs .wide { grid-column: 1 / 3; }
.bands { display: grid; grid-template-columns: repeat(5, 54px); justify-content: center; padding-top: 61px; }
.bands label { display: flex; flex-direction: column; align-items: center; gap: 8px; font-size: 13px; line-height: 18px; font-weight: bold; }
.bands input { width: 20px; height: 192px; appearance: none; writing-mode: vertical-lr; direction: rtl; }
.bands input::-webkit-slider-runnable-track { width: 4px; border-radius: 2px; background: #fff; }
.bands input::-webkit-slider-thumb {
  width: 20px;
  height: 20px;
  margin-left: -8px;
  border-radius: 50%;
  background: var(--accent);
  box-shadow: 0 0 0 2px var(--panel);
  appearance: none;
}
.stereo {
  display: flex;
  flex-direction: column;
  align-items: center;
  gap: 13px;
  padding: 61px 0 0 8px;
  font-size: 19px;
  font-weight: bold;
  line-height: 24px;
}
.stereo div { display: flex; align-items: center; justify-content: space-between; width: 270px; }
.stereo b { padding-bottom: 14px; font-size: 37px; line-height: 44px; }
.slot-add {
  display: flex;
  flex-direction: column;
  align-items: center;
  padding-top: 124px;
  border: 2px solid #6f7275;
  background: #0a1a23;
  font-size: 20px;
  line-height: 28px;
}
.slot-add svg { margin-bottom: 28px; }
.slot-empty { background: #0a1922; }
.slot-empty.blue { background: #081427; }
.slot-empty.faint { background: #07151e; }
```
